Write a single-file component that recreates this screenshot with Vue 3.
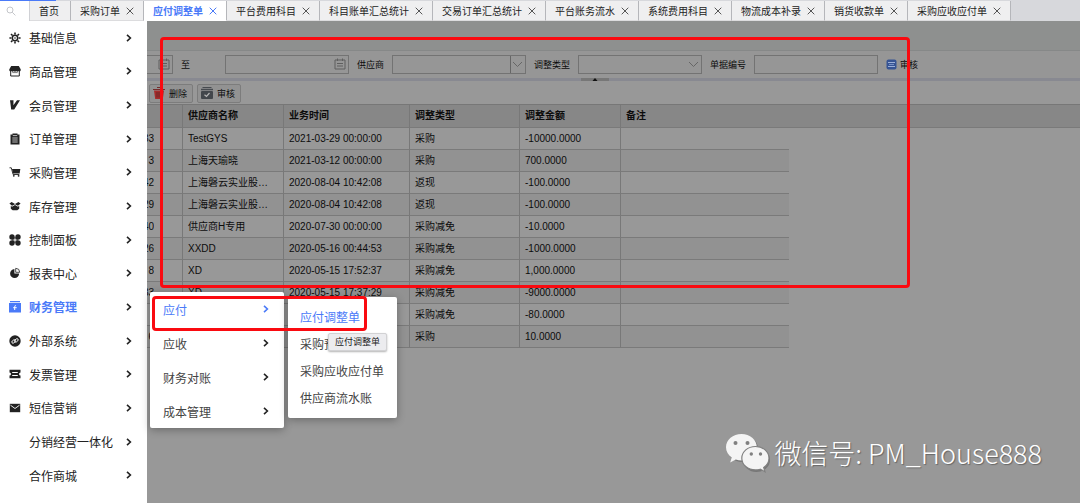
<script setup>
import { ref } from 'vue'

const tabs = ['采购订单', '应付调整单', '平台费用科目', '科目账单汇总统计', '交易订单汇总统计', '平台账务流水', '系统费用科目', '物流成本补录', '销货收款单', '采购应收应付单']
const activeTab = ref('应付调整单')

const menu = [
  { label: '基础信息', icon: 'gear' },
  { label: '商品管理', icon: 'shop' },
  { label: '会员管理', icon: 'vip' },
  { label: '订单管理', icon: 'order' },
  { label: '采购管理', icon: 'cart' },
  { label: '库存管理', icon: 'stock' },
  { label: '控制面板', icon: 'panel' },
  { label: '报表中心', icon: 'chart' },
  { label: '财务管理', icon: 'money' },
  { label: '外部系统', icon: 'link' },
  { label: '发票管理', icon: 'ticket' },
  { label: '短信营销', icon: 'mail' },
  { label: '分销经营一体化', icon: '' },
  { label: '合作商城', icon: '' },
]
const activeMenu = ref('财务管理')
const groups = ['应付', '应收', '财务对账', '成本管理']
const pages = ['应付调整单', '采购预付单', '采购应收应付单', '供应商流水账']

const rows = [
  ['33', 'TestGYS', '2021-03-29 00:00:00', '采购', '-10000.0000'],
  ['3', '上海天瑜晓', '2021-03-12 00:00:00', '采购', '700.0000'],
  ['42', '上海磐云实业股份有限公司', '2020-08-04 10:42:08', '返现', '-100.0000'],
  ['29', '上海磐云实业股份有限公司', '2020-08-04 10:42:08', '返现', '-100.0000'],
  ['40', '供应商H专用', '2020-07-30 00:00:00', '采购减免', '-10.0000'],
  ['26', 'XXDD', '2020-05-16 00:44:53', '采购减免', '-1000.0000'],
  ['8', 'XD', '2020-05-15 17:52:37', '采购减免', '1,000.0000'],
  ['33', 'XD', '2020-05-15 17:37:29', '采购减免', '-9000.0000'],
  ['', '', '', '采购减免', '-80.0000'],
  ['6', '', '', '采购', '10.0000'],
]
</script>

<template>
  <div class="app">
    <header class="tabbar">
      <button class="search" aria-label="搜索">
        <svg width="10" height="10" viewBox="0 0 10 10" fill="none" stroke="#c4c6ca"><circle cx="4" cy="4" r="3" /><path d="M6.2 6.2 9.4 9.4" /></svg>
      </button>
      <button class="tab home">首页</button>
      <div v-for="t in tabs" :key="t" class="tab" :class="{ active: t === activeTab }">
        <button class="tab-name" @click="activeTab = t">{{ t }}</button>
        <button class="close" :aria-label="'关闭' + t">
          <svg width="8" height="8" viewBox="0 0 8 8" fill="none" stroke="currentColor"><path d="M.7.7 7.3 7.3M7.3.7.7 7.3" /></svg>
        </button>
      </div>
    </header>

    <div class="body">
      <nav class="side">
        <button v-for="m in menu" :key="m.label" class="side-item" :class="{ active: m.label === activeMenu }" @click="activeMenu = m.label">
          <svg class="icon" width="12" height="12" viewBox="0 0 12 12" fill="currentColor">
            <g v-if="m.icon === 'gear'">
              <circle cx="6" cy="6" r="2.7" fill="none" stroke="currentColor" stroke-width="1.5" />
              <path d="M6 .4v2M6 9.6v2M.4 6h2M9.6 6h2M2 2l1.5 1.5M8.5 8.5 10 10M10 2 8.5 3.5M3.5 8.5 2 10" stroke="currentColor" stroke-width="1.6" />
              <circle cx="6" cy="6" r=".8" />
            </g>
            <g v-else-if="m.icon === 'shop'">
              <path d="M2.2 1h7.6l1.9 3.2v1.400c-.5 1.200-1.700 1.200-2.200.5-.5 1-1.800 1-2.300 0-.5 1-1.900 1-2.400 0-.5 1-1.800 1-2.300 0C2 6.800.8 6.800.3 5.600V4.200z" />
              <path d="M1.700 6v5h8.600V6" fill="none" stroke="currentColor" stroke-width="1" />
              <path d="M3.300 7.600h5.400" stroke="currentColor" stroke-width=".6" />
            </g>
            <path v-else-if="m.icon === 'vip'" d="M1 1.200h3.500l-.1 5L8 1.200h3L5.200 10.400H2.200z" />
            <g v-else-if="m.icon === 'order'">
              <path d="M1.500 1.500h2V.5h5v1h2v10h-9z" />
              <path d="M3.800 2.600h4.400M3.300 5h5.400M3.300 7h5.400M3.300 9h5.400" stroke="#fff" stroke-width=".7" />
            </g>
            <g v-else-if="m.icon === 'cart'">
              <path d="M.5 1.800h1.800l1.800 6.700h6.200" fill="none" stroke="currentColor" stroke-width=".9" />
              <path d="M3 3h8.300l-.6 4.500H4.100z" />
              <circle cx="4.800" cy="9.800" r=".9" /><circle cx="9.600" cy="9.800" r=".9" />
            </g>
            <g v-else-if="m.icon === 'stock'">
              <path d="M.4 3.500 2.600 2l3.400 2 3.400-2 2.200 1.500L9 5.700 6 4.300 3 5.700z" />
              <path d="M1.800 5.800 3 6.700l3-1.600 3 1.600 1.200-.9v3L8.300 10.300H3.700L1.800 8.800z" />
            </g>
            <g v-else-if="m.icon === 'panel'">
              <circle cx="3" cy="3" r="2.700" /><circle cx="9" cy="3" r="2.700" /><circle cx="3" cy="9" r="2.700" /><circle cx="9" cy="9" r="2.700" />
              <path d="M3 3h2.500v2.500H3zM6.500 3H9v2.500H6.500zM3 6.500h2.500V9H3zM6.500 6.500H9V9H6.500z" />
            </g>
            <g v-else-if="m.icon === 'chart'">
              <path d="M5.400 2.100v4.500h4.700A4.500 4.500 0 1 1 5.400 2.100z" />
              <path d="M6.700 1.300a4 4 0 0 1 4 4h-4z" fill="none" stroke="currentColor" stroke-width=".8" />
            </g>
            <g v-else-if="m.icon === 'money'">
              <path d="M1 0h10v1.200H1zM0 2h12v9.600H0z" />
              <path d="M6.800 4.700Q5.700 4.400 5.700 5.600V9M4.200 6.700h3.500" fill="none" stroke="#fff" />
            </g>
            <g v-else-if="m.icon === 'link'">
              <circle cx="6" cy="6" r="5.700" />
              <g fill="none" stroke="#fff" stroke-width=".9"><rect x="2.600" y="5.300" width="4" height="2.400" rx="1.200" transform="rotate(-40 4.600 6.500)" /><rect x="5.400" y="4.200" width="4" height="2.400" rx="1.200" transform="rotate(-40 7.400 5.400)" /></g>
            </g>
            <g v-else-if="m.icon === 'ticket'">
              <path d="M.5 1.800h11V4.500a1.500 1.500 0 0 0 0 3v2.700H.5V7.500a1.500 1.500 0 0 0 0-3z" />
              <path d="M3.200 4.500h5.600M3.200 7.500h5.600" stroke="#fff" />
            </g>
            <g v-else-if="m.icon === 'mail'">
              <path d="M.8 1.800h10.400v8.400H.8z" />
              <path d="M1.500 3.200 6 6.500l4.500-3.300" fill="none" stroke="#fff" stroke-width=".9" />
            </g>
          </svg>
          <span class="side-label">{{ m.label }}</span>
          <svg class="chev" width="6" height="8" viewBox="0 0 6 8"><path d="M1 .8 4.400 4 1 7.200" /></svg>
        </button>
      </nav>

      <main class="main">
        <div class="strip"></div>
        <form class="filters" @submit.prevent>
          <span class="field tail">
            <input aria-label="开始日期" />
            <svg class="cal" width="12" height="12" viewBox="0 0 12 12"><path d="M1 2h10v9H1zM3.500.5v2.500M8.500.5v2.500M3 5.500h6M3 8h6" /></svg>
          </span>
          <label class="to" for="end">至</label>
          <span class="field date">
            <input id="end" />
            <svg class="cal" width="12" height="12" viewBox="0 0 12 12"><path d="M1 2h10v9H1zM3.500.5v2.500M8.500.5v2.500M3 5.500h6M3 8h6" /></svg>
          </span>
          <label for="supplier">供应商</label>
          <span class="field supplier">
            <select id="supplier"><option></option></select>
            <svg class="down split" width="15" height="17" viewBox="0 0 15 17"><path d="M.5 0v17M3 6l4.500 4.500L12 6" /></svg>
          </span>
          <label for="kind">调整类型</label>
          <span class="field date">
            <select id="kind"><option></option></select>
            <svg class="down" width="15" height="17" viewBox="0 0 15 17"><path d="M3 6l4.500 4.500L12 6" /></svg>
          </span>
          <label for="code">单据编号</label>
          <span class="field date"><input id="code" /></span>
          <button class="audit">
            <svg width="11" height="11" viewBox="0 0 11 11"><rect x=".5" y=".5" width="10" height="10" rx="2" fill="#365494" /><path d="M2 3.500h7M2 7.500h7" stroke="#9db0d8" /><path d="M3 5.500h5" stroke="#7790c5" /></svg>
            审核
          </button>
        </form>
        <div class="splitter"><button aria-label="收起"><svg width="6" height="3" viewBox="0 0 6 3"><path d="M3 0 5.500 3H.5z" fill="#111" /></svg></button></div>
        <div class="actions">
          <button>
            <svg width="14" height="14" viewBox="0 0 14 14"><path d="M2 4.500h10L10.800 13H3.200z" fill="#a72b2b" /><path d="M1 3.500h12M5 1.500h4M5 6v5.500M7 6v5.500M9 6v5.500" stroke="#742b2b" stroke-width="1.200" /></svg>
            删除
          </button>
          <button>
            <svg width="14" height="14" viewBox="0 0 14 14"><path d="M2.500 1.500h9" stroke="#474b50" /><path d="M1 3.500h12" stroke="#474b50" stroke-width="1.500" /><rect x="1" y="5" width="12" height="8" rx="1" fill="#42464b" /><path d="M4.500 8.700 6.500 10.500l3-3.500" fill="none" stroke="#b5b5b5" stroke-width="1.200" /></svg>
            审核
          </button>
        </div>
        <table>
          <colgroup><col class="c-no" /><col class="c-name" /><col class="c-time" /><col class="c-kind" /><col class="c-name" /><col class="c-note" /><col /></colgroup>
          <thead>
            <tr><th></th><th>供应商名称</th><th>业务时间</th><th>调整类型</th><th>调整金额</th><th class="last">备注</th><th class="rest"></th></tr>
          </thead>
          <tbody>
            <tr v-for="(r, i) in rows" :key="i">
              <td class="no"><div>{{ r[0] }}</div></td>
              <td>{{ r[1] }}</td><td>{{ r[2] }}</td><td>{{ r[3] }}</td><td>{{ r[4] }}</td><td class="last"></td><td class="rest"></td>
            </tr>
          </tbody>
        </table>
      </main>
    </div>

    <div class="loading"></div>

    <div class="flyout groups">
      <button v-for="(g, i) in groups" :key="g" :class="{ active: i === 0 }">
        {{ g }}
        <svg class="chev" width="6" height="8" viewBox="0 0 6 8"><path d="M1 .8 4.400 4 1 7.200" /></svg>
      </button>
    </div>
    <div class="flyout pages">
      <a v-for="(p, i) in pages" :key="p" href="#" :class="{ active: i === 0 }">{{ p }}</a>
    </div>
    <div class="tip" role="tooltip">应付调整单</div>

    <div class="mark mark-page"></div>
    <div class="mark mark-menu"></div>

    <div class="sign">
      <svg width="46" height="40" viewBox="0 0 46 40">
        <g fill="#777" transform="translate(1 1)"><ellipse cx="16.500" cy="14.500" rx="15.500" ry="13.500" /><ellipse cx="30.500" cy="26" rx="13.500" ry="12" /></g>
        <path d="M16.500 1C8 1 1 6.800 1 14.200c0 4.200 2.200 7.700 5.700 10.200L5.200 29.500l5.600-3c1.800.6 3.700.9 5.700.9 8.500 0 15.300-5.800 15.300-13.200S25 1 16.500 1z" fill="#f4f4f4" />
        <path d="M30.500 13.500c-7.700 0-13.700 5.100-13.700 11.700s6 11.700 13.700 11.700c1.600 0 3.200-.2 4.700-.7l4.800 2.500-1.300-4.200c3.300-2.200 5.300-5.500 5.300-9.300 0-6.600-5.900-11.700-13.500-11.700z" fill="#f4f4f4" stroke="#808080" stroke-width="1.200" />
        <g fill="#808080"><circle cx="10.500" cy="10" r="2" /><circle cx="22.500" cy="10" r="2" /><circle cx="26.300" cy="21" r="1.700" /><circle cx="35.500" cy="21" r="1.700" /></g>
      </svg>
      <span>微信号: PM_House888</span>
    </div>
  </div>
</template>

<style>
body { margin: 0; }
</style>

<style scoped>
.app {
  position: relative;
  display: flex;
  flex-direction: column;
  min-height: 100vh;
  overflow: hidden;
  background: #fff;
  color: #222;
  font-family: "Liberation Sans", "Noto Sans CJK SC", sans-serif;
  font-size: 10px;
}
.app * { box-sizing: border-box; }
button, input, select { margin: 0; padding: 0; border: 0; background: none; color: inherit; font: inherit; outline: none; }
button { cursor: pointer; white-space: nowrap; }
svg { display: block; flex: none; }

.tabbar { display: flex; height: 21px; padding-top: 1px; background: #d7d8dc; }
.search { display: flex; align-items: center; width: 30px; padding-left: 6px; background: #fff; border-right: 1px solid #d0d1d5; flex: none; }
.tab { display: flex; align-items: center; gap: 6px; flex: none; padding: 0 9px; background: #efeff0; border-right: 1px solid #b5b6ba; border-bottom: 1px solid #dcdcde; color: #222; }
.tab.home { padding-right: 11px; }
.tab.active { background: #fff; border-bottom-color: #fff; color: #4a7af8; }
.active .tab-name { font-weight: bold; }
.close { color: #555; }
.active .close { color: #4a7af8; }
.loading { position: absolute; left: 0; top: 0; width: 56px; height: 1px; background: #4a7af8; }

.body { display: flex; flex: 1; }
.side { display: flex; flex-direction: column; flex: none; width: 147px; padding-bottom: 11px; }
.side-item { display: flex; flex: 1; align-items: center; min-height: 32px; padding: 0 15px 0 9px; color: #222; font-size: 12px; text-align: left; }
.side-item.active { color: #4a7af8; font-weight: bold; }
.side-label { flex: 1; padding-left: 8px; }
.chev { fill: none; stroke: #222; stroke-width: 1.6; }

.main { flex: 1; min-width: 0; overflow: hidden; background: #989898; color: #0c0c0c; }
.strip { height: 29px; background: #8e908f; }
.filters { display: flex; align-items: center; height: 28px; border-top: 1px solid #868888; font-size: 9px; background: #969696; white-space: nowrap; }
.field { position: relative; display: flex; flex: none; height: 19px; border: 1px solid #737373; }
.field input, .field select { width: 100%; appearance: none; }
.tail { width: 26px; border-left: 0; }
.date { width: 124px; }
.supplier { width: 134px; }
.filters label { padding: 0 8px; }
.filters label.to { width: 52px; }
.cal { position: absolute; right: 2px; top: 2px; fill: none; stroke: #5f5f5f; stroke-width: 1; }
.down { position: absolute; right: 0; top: 0; fill: none; stroke: #666; stroke-width: 1; }
.audit { display: flex; align-items: center; gap: 3px; margin-left: 8px; }
.splitter { display: flex; justify-content: center; height: 3px; background: #888991; }
.splitter button { display: flex; justify-content: center; width: 28px; height: 3px; margin-right: 38px; background: #777; }
.actions { display: flex; align-items: center; gap: 4px; height: 23px; padding: 1px 2px 0; font-size: 9px; }
.actions button { display: flex; align-items: center; gap: 3px; height: 19px; padding: 0 5px 0 2px; border: 1px solid #7c7c7c; border-radius: 2px; background: #929292; }

table { width: 100%; table-layout: fixed; border-collapse: separate; border-spacing: 0; }
.c-no { width: 36px; }
.c-name { width: 101px; }
.c-time { width: 126px; }
.c-kind { width: 110px; }
.c-note { width: 168px; }
th, td { height: 22px; padding: 0 14px 0 5px; overflow: hidden; border-right: 1px solid #787878; border-bottom: 1px solid #7a7a7a; text-align: left; text-overflow: ellipsis; white-space: nowrap; line-height: 14px; }
th { height: 24px; border-top: 1px solid #777; background: #878787; }
th.last, td.last, th.rest, td.rest { border-right: 0; }
tbody tr:nth-child(even) td { background: #929292; }
tbody td.rest { border: 0; }
tbody tr:nth-child(even) td.rest { background: none; }
td.no { padding: 0 28px 0 0; }
.no div { display: flex; justify-content: flex-end; width: 7px; overflow: hidden; }

.flyout { position: absolute; display: flex; flex-direction: column; background: #fff; border-radius: 2px; box-shadow: 0 2px 8px rgba(0, 0, 0, .3); color: #444; font-size: 12px; }
.groups { left: 150px; top: 292px; width: 134px; }
.groups button { display: flex; align-items: center; justify-content: space-between; height: 34px; padding: 0 15px 0 13px; }
.pages { left: 288px; top: 297px; width: 109px; padding: 8px 0 5px; }
.pages a { height: 27px; padding-left: 12px; color: inherit; line-height: 27px; text-decoration: none; }
.flyout .active { color: #4a7af8; }
.active .chev { stroke: #222; }
.flyout .active .chev { stroke: #4a7af8; }
.tip { position: absolute; left: 328px; top: 333px; padding: 0 6px; border: 1px solid #d2d2d4; border-radius: 2px; background: #ececef; box-shadow: 0 1px 2px rgba(0, 0, 0, .3); color: #222; font-size: 9px; line-height: 16px; }

.mark { position: absolute; border: 3px solid #fa0a10; border-radius: 4px; pointer-events: none; }
.mark-page { left: 160px; top: 37px; width: 750px; height: 251px; }
.mark-menu { left: 152px; top: 296px; width: 215px; height: 35px; }

.sign { position: absolute; right: 38px; bottom: 30px; display: flex; align-items: center; gap: 3px; color: #fff; font-family: "Noto Sans CJK SC", sans-serif; font-size: 27px; font-weight: 300; line-height: 40px; text-shadow: 1px 1px 1px #666; white-space: nowrap; }
</style>
